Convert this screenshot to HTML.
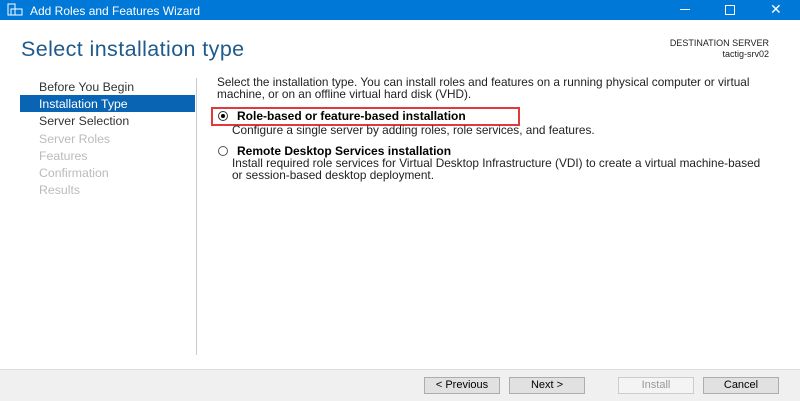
<!DOCTYPE html><html><head><style>
body{margin:0;width:800px;height:400px;overflow:hidden;background:#fff;font-family:"Liberation Sans",sans-serif;position:relative}
.a{position:absolute;white-space:nowrap}
.btn{position:absolute;top:377px;width:74px;height:15px;border:1px solid #adadad;background:#e1e1e1;font-size:11px;text-align:center;line-height:15px;color:#000}
.nav{position:absolute;left:39px;font-size:12.3px}
</style></head><body>
<div class="a" style="left:0;top:0;width:800px;height:20px;background:#0078d7"></div>
<svg class="a" style="left:7px;top:3px" width="16" height="14"><rect x="1" y="1" width="7" height="11" fill="none" stroke="#fff"/><rect x="4" y="6" width="11" height="6" fill="none" stroke="#fff"/></svg>
<div class="a" style="left:30px;top:4px;color:#fff;font-size:12px">Add Roles and Features Wizard</div>
<div class="a" style="left:680px;top:9px;width:10px;height:1px;background:#fff"></div>
<div class="a" style="left:725px;top:5px;width:8px;height:8px;border:1px solid #fff"></div>
<div class="a" style="left:770px;top:1px;color:#fff;font-size:14px">✕</div>
<div class="a" style="left:21px;top:37px;font-size:21.5px;color:#1e5a8c;letter-spacing:0.4px">Select installation type</div>
<div class="a" style="right:31px;top:38px;font-size:9px;text-align:right;line-height:11px;color:#222">DESTINATION SERVER<br>tactig-srv02</div>
<div class="nav" style="top:80px;color:#333">Before You Begin</div>
<div class="a" style="left:20px;top:95px;width:175px;height:17px;background:#0a64b4"></div>
<div class="nav" style="top:97px;color:#fff">Installation Type</div>
<div class="nav" style="top:114px;color:#333">Server Selection</div>
<div class="nav" style="top:132px;color:#bbb">Server Roles</div>
<div class="nav" style="top:149px;color:#bbb">Features</div>
<div class="nav" style="top:166px;color:#bbb">Confirmation</div>
<div class="nav" style="top:183px;color:#bbb">Results</div>
<div class="a" style="left:196px;top:78px;width:1px;height:277px;background:#ccc"></div>
<div class="a" style="left:217px;top:76px;font-size:11.8px;line-height:12px;color:#222">Select the installation type. You can install roles and features on a running physical computer or virtual<br>machine, or on an offline virtual hard disk (VHD).</div>
<div class="a" style="left:211px;top:107px;width:305px;height:15px;border:2px solid #e0393e"></div>
<div class="a" style="left:218px;top:111px;width:8px;height:8px;border:1px solid #333;border-radius:50%"></div>
<div class="a" style="left:221px;top:114px;width:4px;height:4px;background:#000;border-radius:50%"></div>
<div class="a" style="left:237px;top:109px;font-size:12px;font-weight:bold">Role-based or feature-based installation</div>
<div class="a" style="left:232px;top:123px;font-size:11.8px;color:#222">Configure a single server by adding roles, role services, and features.</div>
<div class="a" style="left:218px;top:146px;width:8px;height:8px;border:1px solid #555;border-radius:50%"></div>
<div class="a" style="left:237px;top:144px;font-size:12px;font-weight:bold">Remote Desktop Services installation</div>
<div class="a" style="left:232px;top:157px;font-size:11.8px;line-height:12px;color:#222">Install required role services for Virtual Desktop Infrastructure (VDI) to create a virtual machine-based<br>or session-based desktop deployment.</div>
<div class="a" style="left:0;top:369px;width:800px;height:31px;background:#f0f0f0;border-top:1px solid #ddd"></div>
<div class="btn" style="left:424px">&lt; Previous</div>
<div class="btn" style="left:509px">Next &gt;</div>
<div class="btn" style="left:618px;background:#f4f4f4;border-color:#ccc;color:#999">Install</div>
<div class="btn" style="left:703px">Cancel</div>
</body></html>
